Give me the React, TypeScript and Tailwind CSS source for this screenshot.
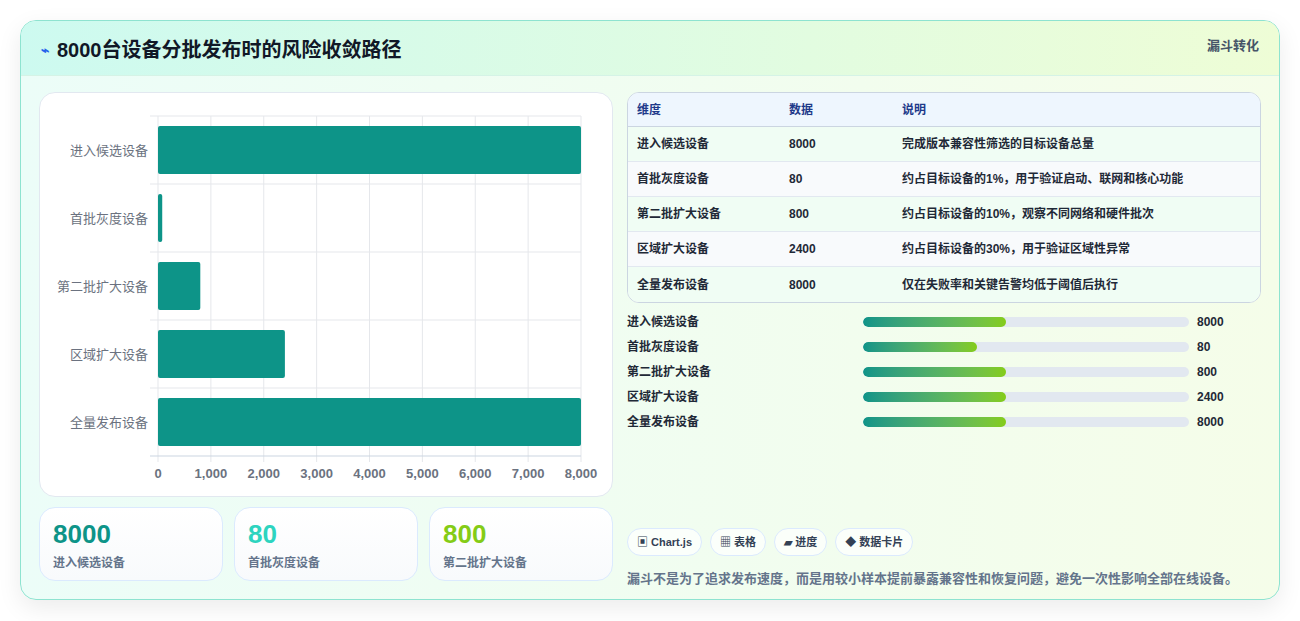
import React from "react";

const rows = [
  { name: "进入候选设备", value: 8000, desc: "完成版本兼容性筛选的目标设备总量", pct: 44 },
  { name: "首批灰度设备", value: 80, desc: "约占目标设备的1%，用于验证启动、联网和核心功能", pct: 35 },
  { name: "第二批扩大设备", value: 800, desc: "约占目标设备的10%，观察不同网络和硬件批次", pct: 44 },
  { name: "区域扩大设备", value: 2400, desc: "约占目标设备的30%，用于验证区域性异常", pct: 44 },
  { name: "全量发布设备", value: 8000, desc: "仅在失败率和关键告警均低于阈值后执行", pct: 44 },
];

const font = { fontFamily: '"Liberation Sans", "Noto Sans CJK SC", sans-serif' };

// plot area inside the chart card (card origin at 39,92)
const X0 = 118;
const X1 = 541;
const Y0 = 23;
const ROW = 68;

const Chart = () => (
  <svg width="572" height="403" className="block">
    {Array.from({ length: 9 }).map((_, i) => {
      const x = X0 + ((X1 - X0) * i) / 8;
      return (
        <g key={i}>
          <line x1={x} y1={Y0} x2={x} y2={Y0 + ROW * 5 + 6} stroke="#e5e7eb" />
          <text x={x} y={385} textAnchor="middle" fontSize="13" fontWeight="700" fill="#6b7280" style={font}>
            {(i * 1000).toLocaleString("en-US")}
          </text>
        </g>
      );
    })}
    {Array.from({ length: 6 }).map((_, i) => (
      <line key={i} x1={X0 - 8} x2={X1} y1={Y0 + ROW * i} y2={Y0 + ROW * i} stroke={i === 5 ? "#cbd5e1" : "#e5e7eb"} />
    ))}
    {rows.map((r, i) => {
      const w = ((X1 - X0) * r.value) / 8000;
      const y = Y0 + ROW * i + 10;
      return (
        <g key={r.name}>
          <rect x={X0} y={y} width={Math.max(w, 3)} height={48} rx="2" fill="#0d9488" />
          <text x={X0 - 10} y={y + 29} textAnchor="end" fontSize="13" fill="#6b7280" style={font}>
            {r.name}
          </text>
        </g>
      );
    })}
  </svg>
);

const App = () => {
  return (
    <div className="min-h-[621px] bg-white pt-5 px-5" style={font}>
      <div className="w-[1260px] h-[580px] rounded-2xl border border-[#8ee3d0] shadow-[0_8px_24px_rgba(0,0,0,0.08)] overflow-hidden bg-gradient-to-r from-[#ecfdf8] to-[#f5fde9]">
        <div className="h-[55px] flex items-start justify-between px-5 pt-[14px] bg-gradient-to-r from-[#cdfaf0] to-[#eefdd6] border-b border-[#d5f3e6]">
          <div className="flex items-center gap-2">
            <span className="text-[#2563eb] text-sm font-bold">⌁</span>
            <h1 className="text-[20px] font-bold text-[#111827]">8000台设备分批发布时的风险收敛路径</h1>
          </div>
          <span className="text-[13px] font-bold text-[#475569] mt-[1px]">漏斗转化</span>
        </div>

        <div className="grid grid-cols-[574px_634px] gap-[14px] px-[18px] pt-4">
          <div className="flex flex-col gap-[10px]">
            <div className="h-[405px] bg-white rounded-2xl border border-[#e2e8f0]">
              <Chart />
            </div>
            <div className="grid grid-cols-3 gap-[11px]">
              {[
                { v: "8000", c: "text-[#0d9488]", l: "进入候选设备" },
                { v: "80", c: "text-[#2dd4bf]", l: "首批灰度设备" },
                { v: "800", c: "text-[#84cc16]", l: "第二批扩大设备" },
              ].map((s) => (
                <div key={s.l} className="h-[74px] rounded-2xl border border-[#dbeafe] bg-gradient-to-b from-white to-[#f8fafc] px-[13px] pt-[11px]">
                  <div className={`text-[26px] leading-[30px] font-bold ${s.c}`}>{s.v}</div>
                  <div className="text-xs font-bold text-[#64748b] mt-[6px]">{s.l}</div>
                </div>
              ))}
            </div>
          </div>

          <div className="flex flex-col">
            <div className="rounded-xl border border-[#cbd5e1] overflow-hidden bg-white">
              <div className="grid grid-cols-[152px_113px_1fr] h-[34px] items-center px-[9px] bg-[#eef6fe] border-b border-[#cbd5e1] text-xs font-bold text-[#1e3a8a]">
                <span>维度</span>
                <span>数据</span>
                <span>说明</span>
              </div>
              {rows.map((r, i) => (
                <div
                  key={r.name}
                  className={`grid grid-cols-[152px_113px_1fr] h-[35px] items-center px-[9px] text-xs font-bold text-[#1f2937] ${i < 4 ? "border-b border-[#e2e8f0]" : ""} ${i % 2 === 0 ? "bg-[#f0fdf4]" : "bg-[#f8fafc]"}`}
                >
                  <span>{r.name}</span>
                  <span>{r.value}</span>
                  <span>{r.desc}</span>
                </div>
              ))}
            </div>

            <div className="flex flex-col gap-[9px] mt-[11px]">
              {rows.map((r) => (
                <div key={r.name} className="grid grid-cols-[236px_326px_1fr] items-center gap-0 h-[16px] text-xs font-bold text-[#1f2937]">
                  <span>{r.name}</span>
                  <div className="h-[10px] rounded-full bg-[#e2e8f0] overflow-hidden">
                    <div className="h-full rounded-full bg-gradient-to-r from-[#0d9488] to-[#84cc16]" style={{ width: `${r.pct}%` }} />
                  </div>
                  <span className="pl-[8px]">{r.value}</span>
                </div>
              ))}
            </div>

            <div className="flex gap-2 mt-[98px]">
              {["▣ Chart.js", "▦ 表格", "▰ 进度", "◆ 数据卡片"].map((c) => (
                <span key={c} className="h-[28px] px-[9px] flex items-center rounded-full border border-[#dbeafe] bg-white/70 text-[11px] font-bold text-[#334155]">
                  {c}
                </span>
              ))}
            </div>
            <p className="mt-[13px] text-[13px] font-bold text-[#64748b]">
              漏斗不是为了追求发布速度，而是用较小样本提前暴露兼容性和恢复问题，避免一次性影响全部在线设备。
            </p>
          </div>
        </div>
      </div>
    </div>
  );
};

export default App;
